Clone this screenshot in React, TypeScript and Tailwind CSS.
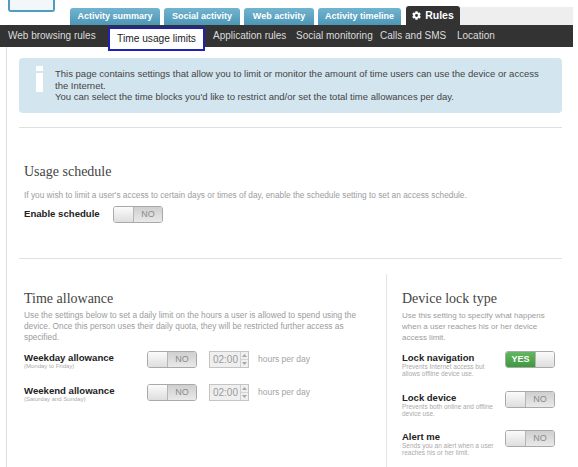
import { FaCog } from 'react-icons/fa';

const topTabs = [
  { label: 'Activity summary', w: 'w-[90px]' },
  { label: 'Social activity', w: 'w-[76px]' },
  { label: 'Web activity', w: 'w-[70px]' },
  { label: 'Activity timeline', w: 'w-[83px]' },
];

const Toggle = ({ on = false }: { on?: boolean }) => (
  <div className="flex h-[17px] w-[50px] shrink-0 overflow-hidden rounded-[3px] border border-[#a9a9a9]">
    {on ? (
      <>
        <div className="flex w-[29px] items-center justify-center bg-linear-to-b from-[#62b862] to-[#3f983f] text-[9px] font-bold text-white">
          YES
        </div>
        <div className="flex-1 border-l border-[#b5b5b5] bg-linear-to-b from-[#fbfbfb] to-[#dedede]" />
      </>
    ) : (
      <>
        <div className="w-[20px] border-r border-[#b5b5b5] bg-linear-to-b from-[#fbfbfb] to-[#dedede]" />
        <div className="flex flex-1 items-center justify-center bg-linear-to-b from-[#cfcfcf] to-[#e9e9e9] text-[9px] text-[#8a8a8a]">
          NO
        </div>
      </>
    )}
  </div>
);

const TimeInput = () => (
  <div className="ml-[12px] flex h-[17px] w-[40px] border border-[#c4c4c4] bg-[#efefef]">
    <div className="flex flex-1 items-center justify-end pr-[2px] text-[10px] text-[#9a9a9a]">02:00</div>
    <div className="flex w-[8px] flex-col border-l border-[#cfcfcf]">
      <div className="flex flex-1 items-center justify-center border-b border-[#d4d4d4]">
        <svg width="5" height="3" viewBox="0 0 5 3">
          <path d="M0 3 L2.5 0 L5 3 Z" fill="#a8a8a8" />
        </svg>
      </div>
      <div className="flex flex-1 items-center justify-center">
        <svg width="5" height="3" viewBox="0 0 5 3">
          <path d="M0 0 L2.5 3 L5 0 Z" fill="#a8a8a8" />
        </svg>
      </div>
    </div>
  </div>
);

const AllowanceRow = ({ title, sub, className }: { title: string; sub: string; className: string }) => (
  <div className={`flex items-start ${className}`}>
    <div className="w-[123px] pt-[1px]">
      <div className="text-[9.6px] font-bold leading-[11px] text-[#222]">{title}</div>
      <div className="text-[6px] leading-[7px] text-[#aaa]">{sub}</div>
    </div>
    <Toggle />
    <TimeInput />
    <div className="ml-[9px] text-[8.5px] leading-[17px] text-[#a3a3a3]">hours per day</div>
  </div>
);

const LockRow = ({ title, sub, on, className }: { title: string; sub: string[]; on?: boolean; className: string }) => (
  <div className={`flex items-start ${className}`}>
    <div className="w-[103px] pt-[1px]">
      <div className="text-[9.5px] font-bold leading-[11px] text-[#222]">{title}</div>
      {sub.map((s) => (
        <div key={s} className="text-[6.5px] leading-[7px] text-[#aaa]">
          {s}
        </div>
      ))}
    </div>
    <Toggle on={on} />
  </div>
);

export default function App() {
  return (
    <div className="h-[467px] w-[578px] overflow-hidden bg-white font-['Liberation_Sans',Arial,sans-serif]">
      {/* top tabs */}
      <div className="flex h-[25px] w-[573px] items-end">
        <div className="ml-[8px] h-[12px] w-[47px] self-start rounded-b-[3px] border-2 border-t-0 border-[#4e9cc2] bg-[#f3f7f9]" />
        <div className="ml-[15px] flex items-end gap-[4px]">
          {topTabs.map((t) => (
            <div
              key={t.label}
              className={`${t.w} flex h-[17px] items-center justify-center rounded-t-[3px] bg-linear-to-b from-[#72b4cf] to-[#4d96b6] text-[9px] font-bold text-white`}
            >
              {t.label}
            </div>
          ))}
          <div className="ml-[1px] flex h-[19px] w-[54px] items-center justify-center gap-[4px] rounded-t-[3px] bg-[#333] text-[10.5px] font-bold text-white">
            <FaCog className="h-[9px] w-[9px]" />
            Rules
          </div>
        </div>
        <div className="h-[18px] flex-1 bg-[#eeeeee]" />
      </div>

      {/* sub navigation */}
      <div className="flex h-[22px] w-[573px] items-start bg-[#333] text-[10px] text-[#dcdcdc]">
        <div className="w-[108px] pl-[8px] leading-[22px]">Web browsing rules</div>
        <div className="relative z-10 mt-[2px] flex h-[24px] w-[97px] items-center justify-center border-2 border-[#1d22b4] bg-white text-[10.2px] text-[#222]">
          Time usage limits
        </div>
        <div className="ml-[8px] flex leading-[22px]">
          <span className="w-[83px]">Application rules</span>
          <span className="w-[84px]">Social monitoring</span>
          <span className="w-[77px]">Calls and SMS</span>
          <span>Location</span>
        </div>
      </div>

      {/* page body */}
      <div className="ml-[6px] h-[420px] border-l border-[#dedede] pl-[12px] pr-[16px] pt-[11px]">
        <div className="flex h-[55px] rounded-[4px] bg-[#d3e5ef]">
          <div className="w-[36px] shrink-0 pl-[17px] pt-[8px]">
            <div className="h-[5px] w-[7px] bg-white" />
            <div className="mt-[2px] h-[19px] w-[7px] bg-white" />
          </div>
          <div className="pr-[20px] pt-[10px] text-[9.5px] leading-[11.5px] text-[#444]">
            <p>
              This page contains settings that allow you to limit or monitor the amount of time users can use the
              device or access the Internet.
            </p>
            <p>You can select the time blocks you'd like to restrict and/or set the total time allowances per day.</p>
          </div>
        </div>

        <div className="mt-[14px] border-t border-[#e0e0e0]" />

        {/* usage schedule */}
        <div className="pl-[5px]">
          <h2 className="mt-[36px] font-['Liberation_Serif',serif] text-[14px] leading-[16px] text-[#444]">
            Usage schedule
          </h2>
          <p className="mt-[10px] text-[8.3px] leading-[10px] text-[#9c9c9c]">
            If you wish to limit a user's access to certain days or times of day, enable the schedule setting to set an
            access schedule.
          </p>
          <div className="mt-[6px] flex items-center">
            <div className="w-[89px] text-[9.6px] font-bold text-[#222]">Enable schedule</div>
            <Toggle />
          </div>
        </div>

        <div className="mt-[35px] border-t border-[#e0e0e0]" />

        {/* columns */}
        <div className="mt-[15px] flex h-[200px]">
          <div className="w-[367px] pl-[5px] pt-[17px]">
            <h2 className="font-['Liberation_Serif',serif] text-[14px] leading-[16px] text-[#444]">Time allowance</h2>
            <p className="mt-[3px] w-[345px] text-[8.3px] leading-[11px] text-[#9c9c9c]">
              Use the settings below to set a daily limit on the hours a user is allowed to spend using the device.
              Once this person uses their daily quota, they will be restricted further access as specified.
            </p>
            <AllowanceRow title="Weekday allowance" sub="(Monday to Friday)" className="mt-[8px]" />
            <AllowanceRow title="Weekend allowance" sub="(Saturday and Sunday)" className="mt-[14px]" />
          </div>
          <div className="flex-1 border-l border-[#e3e3e3] pl-[15px] pt-[17px]">
            <h2 className="font-['Liberation_Serif',serif] text-[14px] leading-[16px] text-[#444]">
              Device lock type
            </h2>
            <p className="mt-[3px] w-[160px] text-[8px] leading-[11px] text-[#9c9c9c]">
              Use this setting to specify what happens when a user reaches his or her device access limit.
            </p>
            <LockRow
              title="Lock navigation"
              sub={['Prevents Internet access but', 'allows offline device use.']}
              on
              className="mt-[8px]"
            />
            <LockRow
              title="Lock device"
              sub={['Prevents both online and offline', 'device use.']}
              className="mt-[14px]"
            />
            <LockRow
              title="Alert me"
              sub={['Sends you an alert when a user', 'reaches his or her limit.']}
              className="mt-[13px]"
            />
          </div>
        </div>
      </div>
    </div>
  );
}
